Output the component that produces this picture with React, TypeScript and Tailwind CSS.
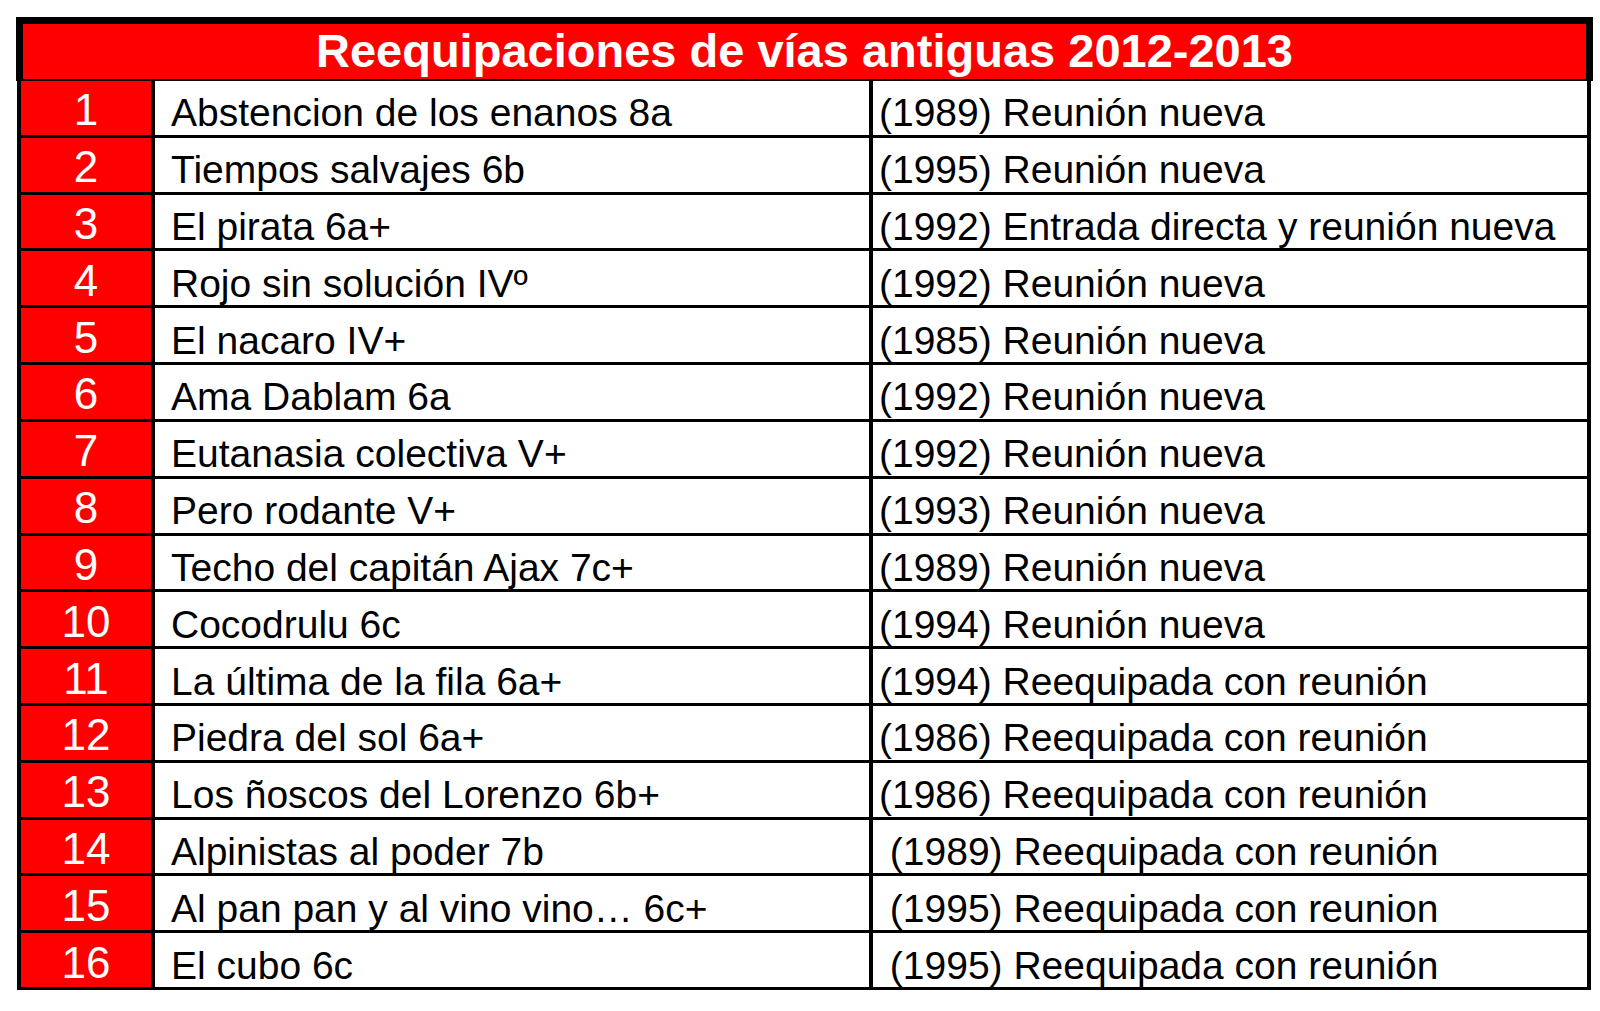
const rows: [string, string, string][] = [
  ['1', 'Abstencion de los enanos 8a', '(1989) Reunión nueva'],
  ['2', 'Tiempos salvajes 6b', '(1995) Reunión nueva'],
  ['3', 'El pirata 6a+', '(1992) Entrada directa y reunión nueva'],
  ['4', 'Rojo sin solución IVº', '(1992) Reunión nueva'],
  ['5', 'El nacaro IV+', '(1985) Reunión nueva'],
  ['6', 'Ama Dablam 6a', '(1992) Reunión nueva'],
  ['7', 'Eutanasia colectiva V+', '(1992) Reunión nueva'],
  ['8', 'Pero rodante V+', '(1993) Reunión nueva'],
  ['9', 'Techo del capitán Ajax 7c+', '(1989) Reunión nueva'],
  ['10', 'Cocodrulu 6c', '(1994) Reunión nueva'],
  ['11', 'La última de la fila 6a+', '(1994) Reequipada con reunión'],
  ['12', 'Piedra del sol 6a+', '(1986) Reequipada con reunión'],
  ['13', 'Los ñoscos del Lorenzo 6b+', '(1986) Reequipada con reunión'],
  ['14', 'Alpinistas al poder 7b', ' (1989) Reequipada con reunión'],
  ['15', 'Al pan pan y al vino vino… 6c+', ' (1995) Reequipada con reunion'],
  ['16', 'El cubo 6c', ' (1995) Reequipada con reunión'],
];

export default function App() {
  return (
    <div className="min-h-[1011px] w-[1600px] bg-white pt-[17px] pl-[16px] font-['Liberation_Sans',Arial,sans-serif]">
      <div className="w-[1577px] h-[64px] bg-black pt-[7px] px-[7px] pb-[2px]">
        <div className="h-full bg-[#ff0000] flex items-center justify-center pb-[3px]">
          <h1 className="text-[47px] leading-none font-bold text-white">
            Reequipaciones de vías antiguas 2012-2013
          </h1>
        </div>
      </div>

      <div className="ml-[1px] w-[1574px] h-[909px] bg-black px-[4px] pb-[3px] grid grid-cols-[130px_714px_714px] grid-rows-[repeat(16,1fr)] gap-x-[4px] gap-y-[3px]">
        {rows.map(([num, name, note]) => (
          <div key={num} className="contents">
            <div className="bg-[#ff0000] flex items-center justify-center pt-[5px] text-[44px] leading-none text-white">
              {num}
            </div>
            <div className="bg-white flex items-center pl-[16px] pt-[10px] text-[39px] leading-none text-black whitespace-pre">
              {name}
            </div>
            <div className="bg-white flex items-center pl-[6px] pt-[10px] text-[39px] leading-none text-black whitespace-pre">
              {note}
            </div>
          </div>
        ))}
      </div>
    </div>
  );
}
